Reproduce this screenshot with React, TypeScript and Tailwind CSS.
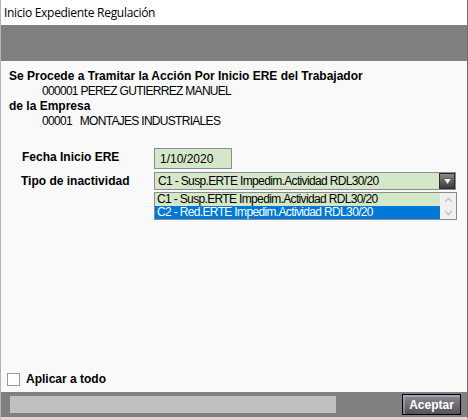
import React from 'react';

const sans = { fontFamily: '"Liberation Sans", Arial, sans-serif' };

const App: React.FC = () => {
  return (
    <div className="w-[468px] h-[419px] bg-[#d9d9d9] flex">
      <div className="flex-1 flex flex-col border-l border-l-[#b4b4b4] border-r border-r-[#6e6e6e] border-b-2 border-b-[#d9d9d9]">
        {/* title bar */}
        <div className="h-[25px] bg-white flex items-center px-[3px] text-[12px] text-black font-['Open_Sans',sans-serif] tracking-[-0.3px]">
          Inicio Expediente Regulación
        </div>
        <div className="h-[36px] bg-[#808080]" />

        {/* content */}
        <div className="flex-1 bg-[#f9f9f9] flex flex-col text-black text-[12px] font-['Liberation_Sans',Arial,sans-serif]">
          <div className="pt-[8px] pl-[8px] leading-[15px]">
            <div className="font-bold text-[12px]">Se Procede a Tramitar la Acción Por Inicio ERE del Trabajador</div>
            <div className="pl-[33px] tracking-[-0.7px]" style={sans}>000001 PEREZ GUTIERREZ MANUEL</div>
            <div className="font-bold">de la Empresa</div>
            <div className="pl-[33px] whitespace-pre tracking-[-0.7px]" style={sans}>00001   MONTAJES INDUSTRIALES</div>
          </div>

          <div className="mt-[19px] flex">
            <div className="w-[153px] pl-[21px] pt-[2px] font-bold leading-[15px]">Fecha Inicio ERE</div>
            <div className="w-[78px] h-[21px] border border-[#8c8c8c] bg-[#d4e7c9] pl-[5px] flex items-center" style={sans}>
              1/10/2020
            </div>
          </div>

          <div className="mt-[3px] flex">
            <div className="w-[153px] pl-[20px] pt-[2px] font-bold leading-[15px]">Tipo de inactividad</div>
            <div className="flex flex-col">
              <div className="w-[302px] h-[18px] border border-[#8c8c8c] bg-[#d4e7c9] flex items-center">
                <span className="flex-1 pl-[3px] leading-[15px] tracking-[-0.65px]" style={sans}>C1 - Susp.ERTE Impedim.Actividad RDL30/20</span>
                <div className="w-[16px] h-[16px] bg-gradient-to-b from-[#8a8a8a] to-[#3c3c3c] border border-[#2a2a2a] flex items-center justify-center">
                  <svg width="9" height="7" viewBox="0 0 9 7">
                    <path d="M0.5 0.5 H8.5 L4.5 6.5 Z" fill="#ffffff" stroke="#555" strokeWidth="0.8" />
                  </svg>
                </div>
              </div>
              <div className="mt-[2px] w-[303px] h-[28px] border border-[#8c8c8c] bg-white flex">
                <div className="flex-1 flex flex-col leading-[13px] tracking-[-0.65px]" style={sans}>
                  <div className="h-[13px] bg-[#d4e7c9] pl-[2px] flex items-center">C1 - Susp.ERTE Impedim.Actividad RDL30/20</div>
                  <div className="h-[13px] bg-[#0078d7] text-white pl-[2px] flex items-center">C2 - Red.ERTE Impedim.Actividad RDL30/20</div>
                </div>
                <div className="w-[16px] bg-[#f0f0f0] flex flex-col items-center justify-around">
                  <svg width="9" height="6" viewBox="0 0 9 6">
                    <path d="M1 5 L4.5 1.5 L8 5" fill="none" stroke="#c0c0c0" strokeWidth="1.3" />
                  </svg>
                  <svg width="9" height="6" viewBox="0 0 9 6">
                    <path d="M1 1 L4.5 4.5 L8 1" fill="none" stroke="#c0c0c0" strokeWidth="1.3" />
                  </svg>
                </div>
              </div>
            </div>
          </div>

          <div className="mt-auto mb-[5px] pl-[6px] flex items-center gap-[6px]">
            <div className="w-[13px] h-[13px] border border-[#9a9a9a] bg-white" />
            <span className="font-bold leading-[15px]">Aplicar a todo</span>
          </div>
        </div>

        {/* bottom bar */}
        <div className="h-[25px] bg-[#808080] flex items-center pl-[9px] pr-[6px]">
          <div className="w-[326px] h-[17px] bg-[#c0c0c0]" />
          <button className="ml-auto w-[59px] h-[21px] border border-black bg-gradient-to-b from-[#8d8893] to-[#56525c] text-white font-bold text-[12px] font-['Liberation_Sans',Arial,sans-serif] shadow-[inset_2px_2px_0_rgba(255,255,255,0.25)]">
            Aceptar
          </button>
        </div>
      </div>
    </div>
  );
};

export default App;
